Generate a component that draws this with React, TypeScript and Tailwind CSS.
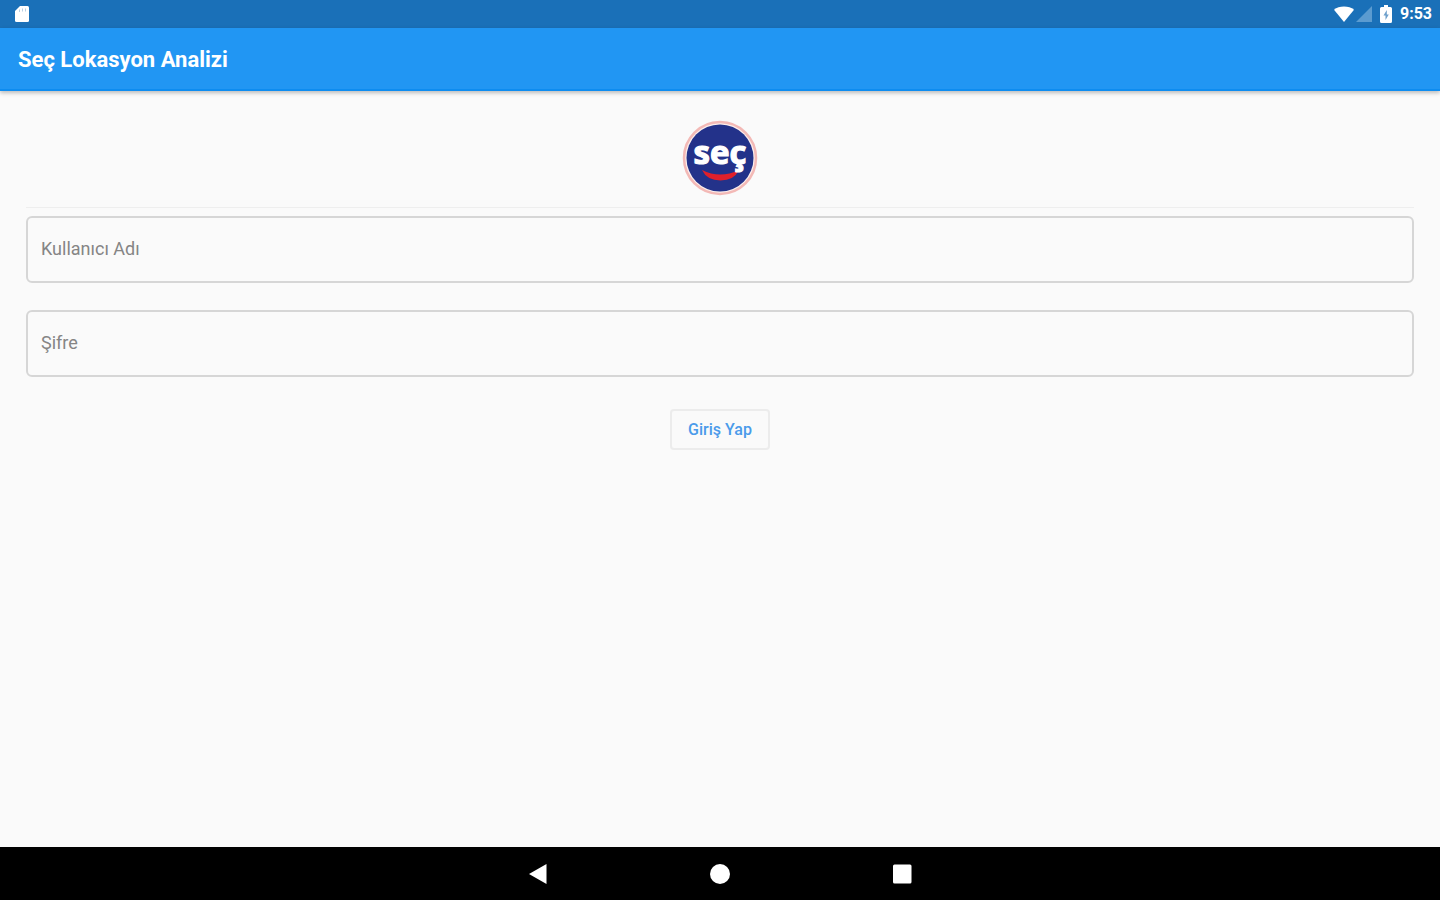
import { useState } from "react";

function StatusBar() {
  return (
    <div className="flex h-7 items-center justify-between bg-[#1a70b8] pr-2 pl-3.5 text-white">
      {/* SD card */}
      <svg className="h-[18px] w-4" viewBox="0 0 16 18" fill="currentColor" aria-hidden="true">
        <path d="M6 1h7.500a1.500 1.500 0 0 1 1.500 1.500v13a1.500 1.500 0 0 1-1.500 1.500h-11a1.500 1.500 0 0 1-1.500-1.500V6z" />
        <path d="M5.500 4.500v2.500M8.500 3.500v3M11.500 3.500v3" stroke="#b9cfe2" strokeWidth="1" />
      </svg>

      <div className="flex items-center">
        {/* Wifi */}
        <svg className="h-4 w-5" viewBox="0 0 20 16" fill="currentColor" aria-hidden="true">
          <path d="M10 16 0 3.800C2.600 1.600 6 .5 10 .5s7.400 1.100 10 3.300z" />
        </svg>
        {/* Signal */}
        <svg className="ml-0.5 h-4 w-4" viewBox="0 0 16 16" aria-hidden="true">
          <path d="M16 0v16H0z" fill="#5b9bd0" />
        </svg>
        {/* Battery */}
        <svg className="ml-2 h-[18px] w-3" viewBox="0 0 12 18" fill="currentColor" aria-hidden="true">
          <path d="M4 0h4v2h2.500q1.500 0 1.500 1.500v13q0 1.500-1.500 1.500h-9Q0 18 0 16.500v-13Q0 2 1.500 2H4z" />
          <path d="M6.800 5 3.500 10.500h2V15l3.300-5.500h-2z" fill="#6d9fcb" />
        </svg>
        <span className="ml-2 text-base leading-7 font-bold">9:53</span>
      </div>
    </div>
  );
}

function Logo() {
  return (
    <svg className="h-[76px] w-[76px]" viewBox="0 0 76 76" role="img" aria-label="seç">
      <circle cx="38" cy="38" r="36" fill="#fbeeed" stroke="#f3b9b6" strokeWidth="2.500" />
      <circle cx="38" cy="38" r="33.500" fill="#23328a" />
      <path d="M20 50q18 9 37 0-5 10.500-18.500 10.500T20 50z" fill="#e0202b" />
      <text
        x="38"
        y="44"
        textAnchor="middle"
        fill="#ffffff"
        stroke="#ffffff"
        strokeWidth="1.200"
        fontSize="33"
        fontWeight="700"
        fontFamily="'Open Sans', sans-serif"
      >
        seç
      </text>
    </svg>
  );
}

type FieldProps = {
  id: string;
  label: string;
  type?: string;
  value: string;
  onChange: (value: string) => void;
};

function Field({ id, label, type = "text", value, onChange }: FieldProps) {
  return (
    <input
      id={id}
      type={type}
      aria-label={label}
      placeholder={label}
      value={value}
      onChange={(e) => onChange(e.target.value)}
      className="h-[67px] w-full rounded-md border-2 border-[#d6d6d6] bg-transparent px-[13px] pb-0.5 text-lg text-gray-800 placeholder:text-[#858585] focus:border-[#2196f3] focus:outline-none"
    />
  );
}

function NavBar() {
  return (
    <nav className="flex h-[53px] items-center justify-center gap-[158px] bg-black text-white">
      <button type="button" aria-label="Geri">
        <svg className="h-6 w-6" viewBox="0 0 24 24" fill="currentColor">
          <path d="M20.500 2v20L3 12z" />
        </svg>
      </button>
      <button type="button" aria-label="Ana ekran">
        <svg className="h-6 w-6" viewBox="0 0 24 24" fill="currentColor">
          <circle cx="12" cy="12" r="10" />
        </svg>
      </button>
      <button type="button" aria-label="Son uygulamalar">
        <svg className="h-6 w-6" viewBox="0 0 24 24" fill="currentColor">
          <rect x="3" y="2.500" width="18.500" height="19" rx="1.500" />
        </svg>
      </button>
    </nav>
  );
}

export default function App() {
  const [username, setUsername] = useState("");
  const [password, setPassword] = useState("");

  return (
    <div className="flex min-h-screen flex-col bg-[#fafafa] font-[Roboto,sans-serif]">
      <StatusBar />

      <header className="flex h-[63px] items-center border-b-2 border-[#0d8cf0] bg-[#2196f3] px-[18px] pt-0.5 shadow-[0_2px_4px_rgba(0,0,0,0.25)]">
        <h1 className="text-[22px] leading-7 font-bold text-white">Seç Lokasyon Analizi</h1>
      </header>

      <main className="flex-1 px-[26px] pt-[29px]">
        <form className="flex flex-col items-center" onSubmit={(e) => e.preventDefault()}>
          <Logo />

          <hr className="mt-[11px] mb-2 w-full border-[#eeeeee]" />

          <div className="flex w-full flex-col gap-[27px]">
            <Field id="username" label="Kullanıcı Adı" value={username} onChange={setUsername} />
            <Field id="password" label="Şifre" type="password" value={password} onChange={setPassword} />
          </div>

          <button
            type="submit"
            className="mt-8 h-[41px] w-[100px] rounded-sm border-2 border-[#ececec] text-base font-medium text-[#4a9bea]"
          >
            Giriş Yap
          </button>
        </form>
      </main>

      <NavBar />
    </div>
  );
}
